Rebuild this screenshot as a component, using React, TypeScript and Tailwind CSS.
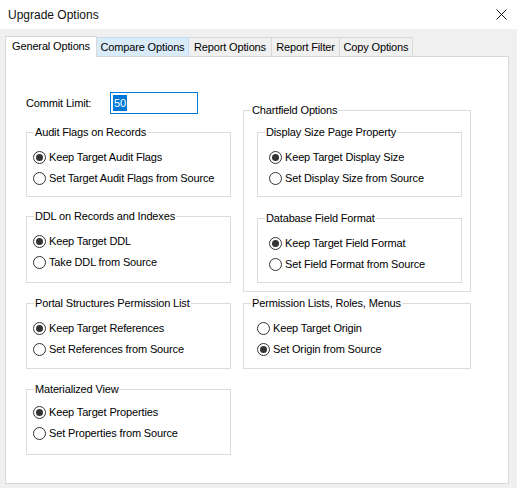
import React from 'react';

type Choice = { label: string; checked?: boolean };

interface GroupBoxProps {
  title: string;
  className?: string;
  children: React.ReactNode;
}

// Classic Win32 group box: etched border with the caption cut into the top line
function GroupBox({ title, className = '', children }: GroupBoxProps) {
  return (
    <fieldset className={`border border-[#dcdcdc] ${className}`}>
      <legend className="ml-[7px] px-[1px] leading-[13px]">{title}</legend>
      {children}
    </fieldset>
  );
}

function Radio({ label, checked }: Choice) {
  return (
    <div className="flex h-[21px] items-center">
      <span className="flex h-[13px] w-[13px] items-center justify-center rounded-full border border-[#333333] bg-white">
        {checked && <span className="h-[7px] w-[7px] rounded-full bg-[#333333]" />}
      </span>
      <span className="ml-[3px]">{label}</span>
    </div>
  );
}

function RadioGroup({ title, items, inset, className = '' }: { title: string; items: Choice[]; inset: string; className?: string }) {
  return (
    <GroupBox title={title} className={className}>
      <div className={`pt-[8px] ${inset}`}>
        {items.map((item) => (
          <Radio key={item.label} {...item} />
        ))}
      </div>
    </GroupBox>
  );
}

const tabs = [
  { label: 'Compare Options', width: 'w-[92px]', hover: true },
  { label: 'Report Options', width: 'w-[83px]' },
  { label: 'Report Filter', width: 'w-[68px]' },
  { label: 'Copy Options', width: 'w-[73px]' },
];

export default function App() {
  return (
    <div className="h-[488px] w-[517px] overflow-hidden bg-[#f0f0f0] font-['Liberation_Sans',Arial,sans-serif] text-[11px] tracking-[-0.15px] text-black">
      {/* Title bar */}
      <div className="flex h-[29px] items-center justify-between bg-white pl-[8px] pr-[10px]">
        <span className="text-[12px] tracking-normal text-[#111]">Upgrade Options</span>
        <svg width="11" height="11" viewBox="0 0 11 11" className="text-[#111]">
          <path d="M0.5 0.5 L10.5 10.5 M10.5 0.5 L0.5 10.5" stroke="currentColor" strokeWidth="1" fill="none" />
        </svg>
      </div>

      <div className="pl-[5px] pt-[7px]">
        {/* Tab strip */}
        <div className="flex h-[20px] items-end">
          <div className="relative z-10 -mb-px flex h-[21px] w-[92px] items-center justify-center border-x border-t border-[#d9d9d9] bg-white pb-[2px]">
            General Options
          </div>
          {tabs.map((t) => (
            <div
              key={t.label}
              className={`flex h-[19px] items-center justify-center border-r border-t ${t.width} ${
                t.hover ? 'border-[#c5dcf2] bg-[#d9ebf9]' : 'border-[#d9d9d9] bg-[#f0f0f0]'
              }`}
            >
              {t.label}
            </div>
          ))}
        </div>

        {/* Tab page */}
        <div className="h-[428px] w-[504px] border border-[#d9d9d9] bg-white">
          <div className="flex gap-[12px] pl-[20px]">
            {/* Left column */}
            <div className="flex w-[205px] flex-col">
              <div className="mt-[35px] flex h-[22px] items-center">
                <span className="w-[84px]">Commit Limit:</span>
                <div className="flex h-[22px] w-[88px] items-center border border-[#0078d7] pl-[2px]">
                  <span className="bg-[#0078d7] px-px leading-[16px] text-white">50</span>
                </div>
              </div>
              <RadioGroup
                title="Audit Flags on Records"
                inset="pl-[6px]"
                className="mt-[12px] h-[71px]"
                items={[{ label: 'Keep Target Audit Flags', checked: true }, { label: 'Set Target Audit Flags from Source' }]}
              />
              <RadioGroup
                title="DDL on Records and Indexes"
                inset="pl-[6px]"
                className="mt-[13px] h-[73px]"
                items={[{ label: 'Keep Target DDL', checked: true }, { label: 'Take DDL from Source' }]}
              />
              <RadioGroup
                title="Portal Structures Permission List"
                inset="pl-[6px]"
                className="mt-[14px] h-[72px]"
                items={[{ label: 'Keep Target References', checked: true }, { label: 'Set References from Source' }]}
              />
              <GroupBox title="Materialized View" className="mt-[14px] h-[72px]">
                <div className="pl-[6px] pt-[6px]">
                  <Radio label="Keep Target Properties" checked />
                  <Radio label="Set Properties from Source" />
                </div>
              </GroupBox>
            </div>

            {/* Right column */}
            <div className="flex w-[228px] flex-col">
              <GroupBox title="Chartfield Options" className="mt-[47px] h-[188px]">
                <div className="mr-[8px] ml-[13px] mt-[9px] flex flex-col">
                  <RadioGroup
                    title="Display Size Page Property"
                    inset="pl-[11px]"
                    className="h-[71px]"
                    items={[{ label: 'Keep Target Display Size', checked: true }, { label: 'Set Display Size from Source' }]}
                  />
                  <RadioGroup
                    title="Database Field Format"
                    inset="pl-[11px]"
                    className="mt-[15px] h-[71px]"
                    items={[{ label: 'Keep Target Field Format', checked: true }, { label: 'Set Field Format from Source' }]}
                  />
                </div>
              </GroupBox>
              <RadioGroup
                title="Permission Lists, Roles, Menus"
                inset="pl-[13px]"
                className="mt-[5px] h-[72px]"
                items={[{ label: 'Keep Target Origin' }, { label: 'Set Origin from Source', checked: true }]}
              />
            </div>
          </div>
        </div>
      </div>
    </div>
  );
}
